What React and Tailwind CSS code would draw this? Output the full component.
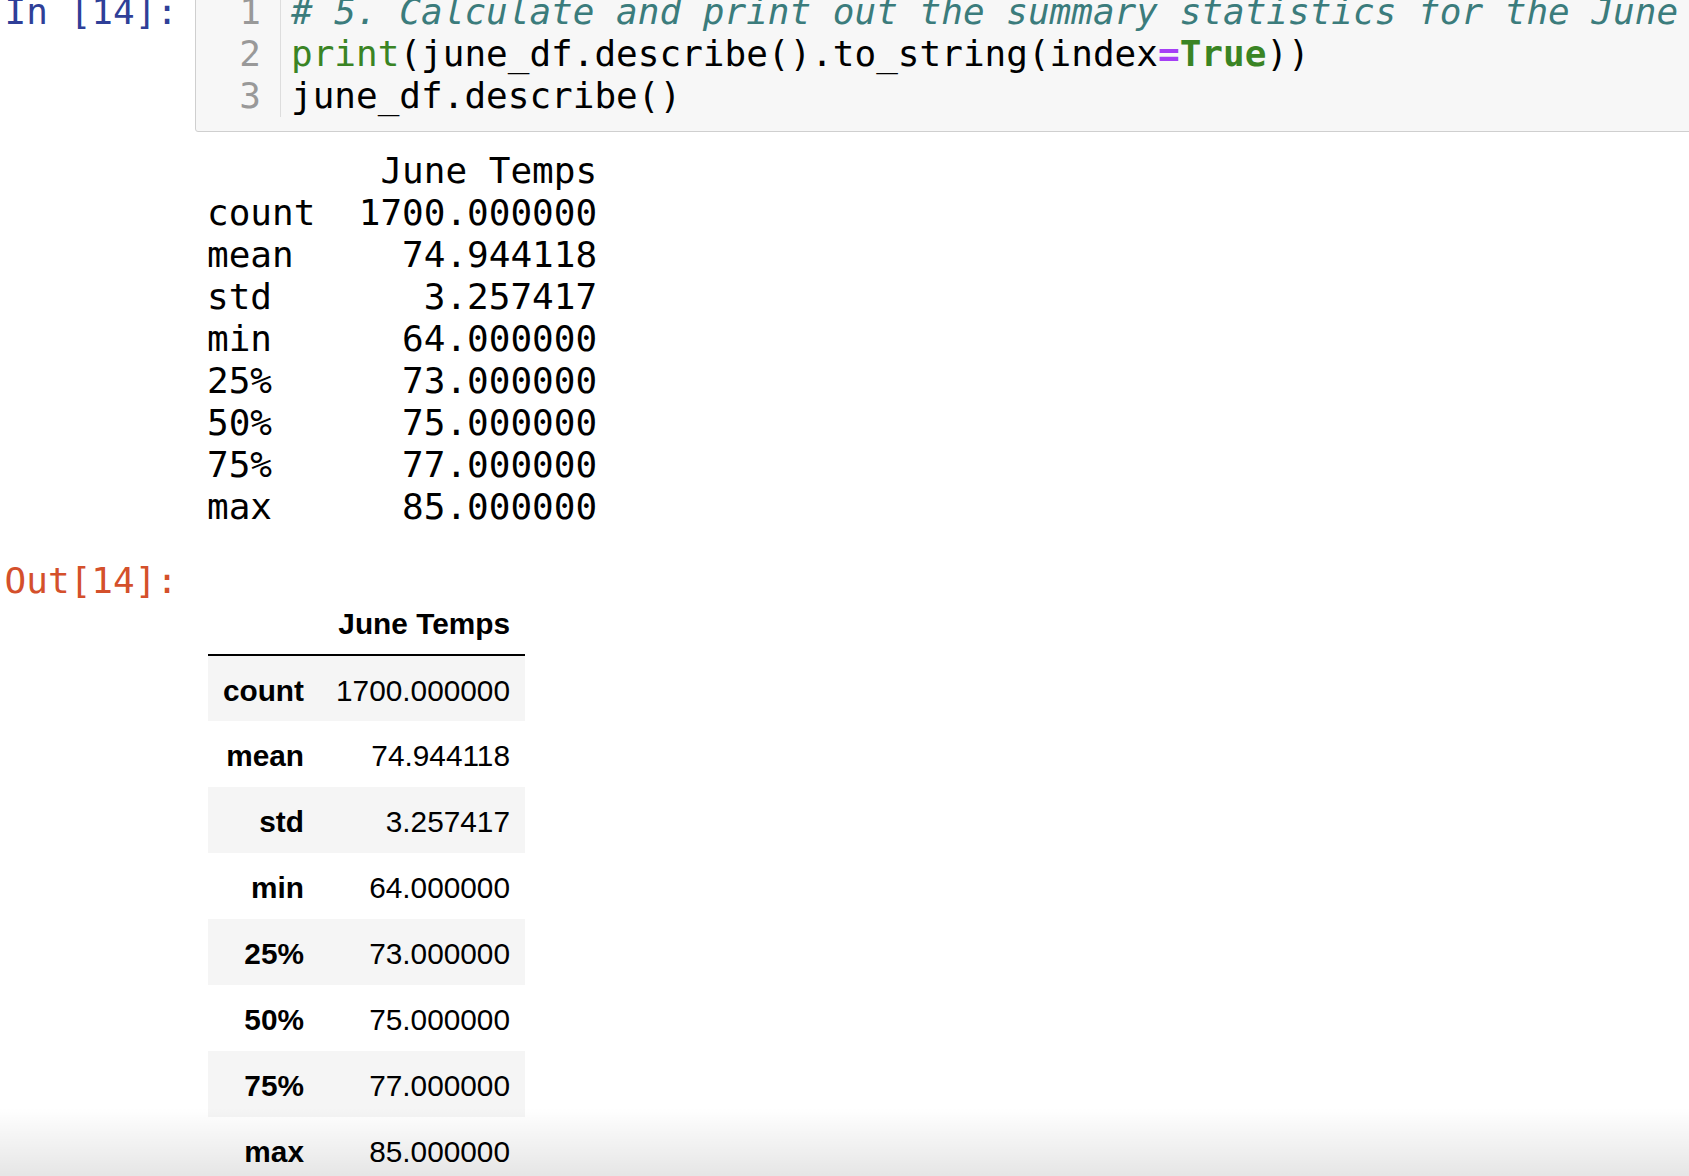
const CODE_LINES = [
  [{ t: '# 5. Calculate and print out the summary statistics for the June Temperature DataFrame.', c: 'text-[#3b7c7c] italic' }],
  [
    { t: 'print', c: 'text-[#3a8424]' },
    { t: '(june_df.describe().to_string(index', c: 'text-black' },
    { t: '=', c: 'text-[#a53ff5] font-bold' },
    { t: 'True', c: 'text-[#3a8424] font-bold' },
    { t: '))', c: 'text-black' },
  ],
  [{ t: 'june_df.describe()', c: 'text-black' }],
]

const STATS = [
  ['count', '1700.000000'],
  ['mean', '74.944118'],
  ['std', '3.257417'],
  ['min', '64.000000'],
  ['25%', '73.000000'],
  ['50%', '75.000000'],
  ['75%', '77.000000'],
  ['max', '85.000000'],
]

const PRINTED = [
  'June Temps'.padStart(18, ' '),
  ...STATS.map(([k, v]) => k.padEnd(5, ' ') + v.padStart(13, ' ')),
]

const mono = "font-['DejaVu_Sans_Mono','Liberation_Mono',monospace]"

export default function App() {
  return (
    <div className="relative h-[1176px] w-full overflow-hidden bg-white">
      {/* input cell */}
      <div className={`flex -mt-[20px] text-[36px] leading-[42px] ${mono}`}>
        <div className="w-[195px] shrink-0 pt-[11px] pr-[17px] text-right text-[#2f3f98] whitespace-pre">
          In [14]:
        </div>
        <div className="flex min-w-0 flex-1 -mr-[10px] rounded-[3px] border border-[#cfcfcf] bg-[#f7f7f7] pt-[10px] pb-[14px]">
          <div className="w-[85px] shrink-0 border-r border-[#dddddd] pr-[19px] text-right text-[#999999]">
            {CODE_LINES.map((_, i) => (
              <div key={i}>{i + 1}</div>
            ))}
          </div>
          <div className="min-w-0 flex-1 pl-[10px] whitespace-pre">
            {CODE_LINES.map((line, i) => (
              <div key={i}>
                {line.map((s, j) => (
                  <span key={j} className={s.c}>{s.t}</span>
                ))}
              </div>
            ))}
          </div>
        </div>
      </div>

      {/* printed output */}
      <div className={`mt-[18px] pl-[207px] text-[36px] leading-[42px] text-black whitespace-pre ${mono}`}>
        {PRINTED.map((l, i) => (
          <div key={i}>{l}</div>
        ))}
      </div>

      {/* Out prompt + html table */}
      <div className="mt-[32px] flex">
        <div className={`w-[195px] shrink-0 pr-[17px] text-right text-[36px] leading-[42px] text-[#d4502b] ${mono}`}>
          Out[14]:
        </div>
        <div className="pt-[30px] pl-[13px] font-['Liberation_Sans',Arial,sans-serif] text-[29.8px] text-black">
          <table className="border-collapse">
            <thead>
              <tr className="h-[65px] border-b-2 border-black">
                <th className="w-[111px]" />
                <th className="w-[206px] pt-[5px] pr-[15px] text-right font-bold">June Temps</th>
              </tr>
            </thead>
            <tbody>
              {STATS.map(([k, v], i) => (
                <tr key={k} className={`h-[66px] ${i % 2 === 0 ? 'bg-[#f5f5f5]' : 'bg-white'}`}>
                  <th className="pt-[5px] pr-[15px] text-right font-bold">{k}</th>
                  <td className="pt-[5px] pr-[15px] text-right">{v}</td>
                </tr>
              ))}
            </tbody>
          </table>
        </div>
      </div>

      {/* bottom shading over the page */}
      <div className="pointer-events-none absolute inset-x-0 bottom-0 h-[68px] bg-gradient-to-b from-transparent to-black/10" />
    </div>
  )
}
